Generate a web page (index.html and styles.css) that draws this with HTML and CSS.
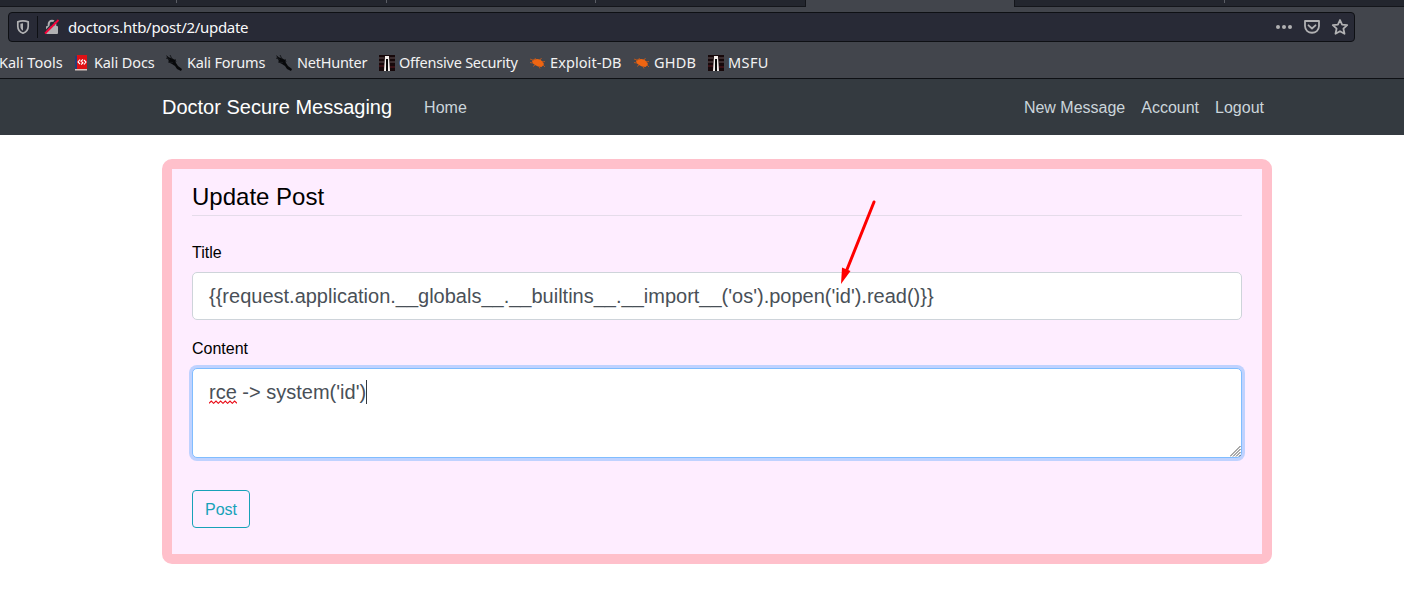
FILE: index.html
```html
<!DOCTYPE html>
<html lang="en">
<head>
<meta charset="utf-8">
<title>Update Post</title>
<link rel="stylesheet" href="styles.css">
</head>
<body>
<svg class="defs" width="0" height="0" aria-hidden="true">
  <symbol id="dragon" viewBox="0 0 16 16"><path d="M0 0l3 2.500 2.500.5L9 5l1 3 2 3 4 3-1 2-4-2-2-3-3-2-3-1.500L2.500 5z" fill="#08090b"/><path d="M0 3l4 1.500M2 7l5 .5M4 0l2 4M9 4l1 3" stroke="#17191d"/></symbol>
  <symbol id="offsec" viewBox="0 0 16 16"><path d="M0 0h16v16H0z" fill="#17090b"/><path d="M0 3h5M11 3h5M0 7h5M11 7h5" stroke="#4a3a3c" stroke-width="1.400"/><path d="M0 11h5M11 12h5" stroke="#3a1116" stroke-width="2"/><path d="M6 1h4l1 15H9V4H7v12H5z" fill="#f4efec"/><path d="M7 4h2v12H7z" fill="#080808"/></symbol>
  <symbol id="bug" viewBox="0 0 16 16"><path d="M2 6l1.500-1.500L7 4l3 .5 2.500 2L14 9l-1 1.500-1.500 1.500L8 11.500 5 10 3 8.500z" fill="#ef6512"/><path d="M0 4l4 1.500M5 3l1 2M3 8L0 7.500M5 10l-2 1.500M9 11l1 2.500M10 5l1.500-2M12 7l3-.5M13 10l2 2" stroke="#c0581b" stroke-width=".9" fill="none"/></symbol>
</svg>
<div class="tabs">
  <i class="tab t1"></i><i class="tab t2"></i><i class="tab t3"></i><i class="tab t4"></i><i class="tab active"></i><i class="tab t6"></i><i class="tab t7"></i>
</div>
<div class="toolbar">
  <div class="urlbar">
    <svg class="shield" width="14" height="16" viewBox="0 0 14 16"><path d="M7 1.900c-2 0-4 .5-5.200 1v4.300c0 3.500 2 5.800 5.200 7 3.200-1.200 5.200-3.500 5.200-7V2.900c-1.200-.5-3.200-1-5.200-1z" fill="none" stroke="#b1b1b3" stroke-width="1.700"/><path d="M7 4.200v7.600C5 10.700 4.400 9 4.400 7V4.700z" fill="#b1b1b3"/></svg>
    <i class="divider"></i>
    <svg class="lock" width="16" height="16" viewBox="0 0 16 16"><path d="M4.700 8V5a3.300 3.300 0 0 1 6.600 0v3" fill="none" stroke="#b1b1b3" stroke-width="2"/><rect x="2" y="7" width="12" height="8" rx="1" fill="#b1b1b3"/><path d="M0 13.500L13 0" stroke="#282a36" stroke-width="1.500"/><path d="M1 14.500L14.500 1" stroke="#f90039" stroke-width="1.800"/></svg>
    <span class="url">doctors.htb/post/2/update</span>
    <svg class="actions" width="74" height="18" viewBox="0 0 74 18"><g fill="#b1b1b3"><circle cx="3" cy="9" r="2"/><circle cx="9" cy="9" r="2"/><circle cx="15" cy="9" r="2"/></g><g fill="none" stroke="#b1b1b3" stroke-width="1.800" stroke-linejoin="round" stroke-linecap="round"><path d="M30 3h14v5c0 9-14 9-14 0z"/><path d="M33.500 7.300L37 10.500l3.500-3.200"/><path d="M65 2l2.100 4.700 5.100.5-3.800 3.400 1.100 5.200L65 13.200l-4.500 2.600 1.100-5.200-3.800-3.400 5.100-.5z"/></g></svg>
  </div>
</div>
<div class="bookmarks">
  <span class="bm first">Kali Tools</span>
  <span class="bm"><svg class="ico" viewBox="0 0 16 16"><path d="M1 1h2v14H1z" fill="#263d78"/><path d="M3 0h10v14H3z" fill="#df1115"/><path d="M1 14h12v1.500H1z" fill="#d7c6c0"/><path d="M6 4.500L4 7l2 2M10 5l2 2-2 2.500M9 4.500L7 6l2 2-2 1.500" fill="none" stroke="#fff" stroke-width="1.100"/></svg><b class="n docs">Kali Docs</b></span>
  <span class="bm"><svg class="ico"><use href="#dragon"/></svg><b class="n forums">Kali Forums</b></span>
  <span class="bm"><svg class="ico"><use href="#dragon"/></svg><b class="n hunter">NetHunter</b></span>
  <span class="bm"><svg class="ico"><use href="#offsec"/></svg><b class="n security">Offensive Security</b></span>
  <span class="bm"><svg class="ico"><use href="#bug"/></svg><b class="n exploit">Exploit-DB</b></span>
  <span class="bm"><svg class="ico"><use href="#bug"/></svg><b class="n ghdb">GHDB</b></span>
  <span class="bm"><svg class="ico"><use href="#offsec"/></svg><b class="n msfu">MSFU</b></span>
</div>
<nav class="navbar">
  <a class="brand">Doctor Secure Messaging</a>
  <a class="link">Home</a>
  <div class="right"><a class="link">New Message</a><a class="link">Account</a><a class="link">Logout</a></div>
</nav>
<main class="card">
  <h1 class="legend">Update Post</h1>
  <div class="label">Title</div>
  <div class="field">{{request.application.__globals__.__builtins__.__import__('os').popen('id').read()}}</div>
  <div class="label">Content</div>
  <div class="field area"><span class="misspelt">rce<svg class="wave" width="28" height="4" viewBox="0 0 28 4"><path d="M0 3.300l2.300-2.300 2.300 2.300L7 1l2.300 2.300L11.600 1l2.400 2.300L16.300 1l2.300 2.300L21 1l2.300 2.300L25.600 1 28 3.300" fill="none" stroke="#e90b16" stroke-width="1.100"/></svg></span> -&gt; system('id')<i class="caret"></i>
    <svg class="grip" width="11" height="11" viewBox="0 0 11 11"><path d="M0 10.500L10.500 0M3 10.500L10.500 3M6 10.500L10.500 6M9 10.500L10.500 9" stroke="#555" stroke-width="1"/></svg>
  </div>
  <a class="post">Post</a>
</main>
<svg class="arrow" width="40" height="88" viewBox="0 0 40 88"><path d="M34 4L6 74" stroke="#f00" stroke-width="3" stroke-linecap="round"/><path d="M1 86l1-16.500 8.500 3.500z" fill="#f00"/></svg>
</body>
</html>
```
FILE: styles.css
```css
* { box-sizing: border-box; }
body { margin: 0; height: 612px; overflow: hidden; background: #fff; font: 16px/1.5 "Liberation Sans", Arial, sans-serif; color: #000; }
.defs { position: absolute; }
.tabs { height: 7px; background: #42454c; display: flex; }
.tab { height: 7px; background: #23262e; border-bottom: 1px solid #14161b; position: relative; }
.tab::after { content: ""; position: absolute; right: 0; top: 0; width: 1px; height: 3px; background: #5b5e65; }
.t1 { width: 177px; }
.t2 { width: 210px; }
.t3 { width: 209px; }
.t4 { width: 210px; border-right: 1px solid #14161b; }
.t4::after, .t7::after { display: none; }
.active { width: 208px; background: #42454c; border: 0; }
.active::after { display: none; }
.t6 { width: 211px; border-left: 1px solid #14161b; }
.t7 { flex: 1; }
.toolbar { height: 40px; padding: 5px 49px 0 8px; background: #42454c; }
.urlbar { height: 30px; border: 1px solid #0e1014; border-radius: 4px; background: #282a36; display: flex; align-items: center; padding: 0 5px 0 7px; }
.shield, .lock, .actions { flex: none; display: block; }
.divider { width: 1px; height: 22px; background: #0e1014; margin: 0 6px 0 7px; }
.url { margin-left: 8px; font: 15px/28px "Noto Sans", sans-serif; letter-spacing: -0.29px; color: #f9f9fa; white-space: nowrap; flex: 1; }
.bookmarks { height: 32px; background: #42454c; border-bottom: 1px solid #0e1014; display: grid; grid-template-columns: 74px 92px 110px 103px 151px 104px 74px 100px; font: 14.500px/31px "Noto Sans", sans-serif; color: #f2f2f3; white-space: nowrap; overflow: hidden; }
.bm { display: flex; align-items: center; height: 31px; padding-bottom: 1px; }
.first { margin-left: -1px; }
.ico { width: 16px; height: 16px; margin: 1px 4px 0 0; flex: none; }
.n { font-weight: 400; }
.docs { letter-spacing: -0.12px; }
.forums { letter-spacing: -0.17px; margin-left: 1px; }
.hunter { letter-spacing: -0.25px; margin-left: 1px; }
.security { letter-spacing: -0.23px; }
.exploit { letter-spacing: 0.08px; }
.ghdb { letter-spacing: 0.2px; }
.msfu { letter-spacing: 0.4px; }
.navbar { height: 56px; padding: 0 132px 0 162px; background: #343a40; display: flex; align-items: center; }
.brand { color: #fff; font-size: 20px; line-height: 30px; margin-right: 24px; }
.link { color: #cbd5db; padding: 9px 8px 7px; }
.right { margin-left: auto; display: flex; }
.card { width: 1110px; height: 405px; margin: 24px 0 0 162px; border: 10px solid #ffc0cb; border-radius: 10px; background: #feedff; padding: 10px 20px; }
.legend { font-size: 24px; font-weight: 400; line-height: 36px; margin: 0 0 24px; border-bottom: 1px solid #e5dcea; }
.label { height: 24px; line-height: 26px; margin-bottom: 8px; }
.field { height: 48px; border: 1px solid #ced4da; border-radius: 5px; padding: 8px 16px; font-size: 20px; line-height: 30px; background: #fff; color: #495057; margin-bottom: 16px; position: relative; white-space: nowrap; }
.area { height: 90px; border-color: #80bdff; box-shadow: 0 0 0 3px #bfd2ff; margin-bottom: 32px; }
.misspelt { position: relative; }
.wave { position: absolute; left: 0; bottom: -1px; }
.caret { display: inline-block; width: 1px; height: 24px; background: #343a40; vertical-align: -5px; }
.grip { position: absolute; right: 0; bottom: 0; }
.post { display: block; width: 58px; height: 38px; border: 1px solid #17a2b8; border-radius: 4px; color: #17a2b8; text-align: center; line-height: 38px; }
.arrow { position: absolute; left: 840px; top: 198px; }
```
